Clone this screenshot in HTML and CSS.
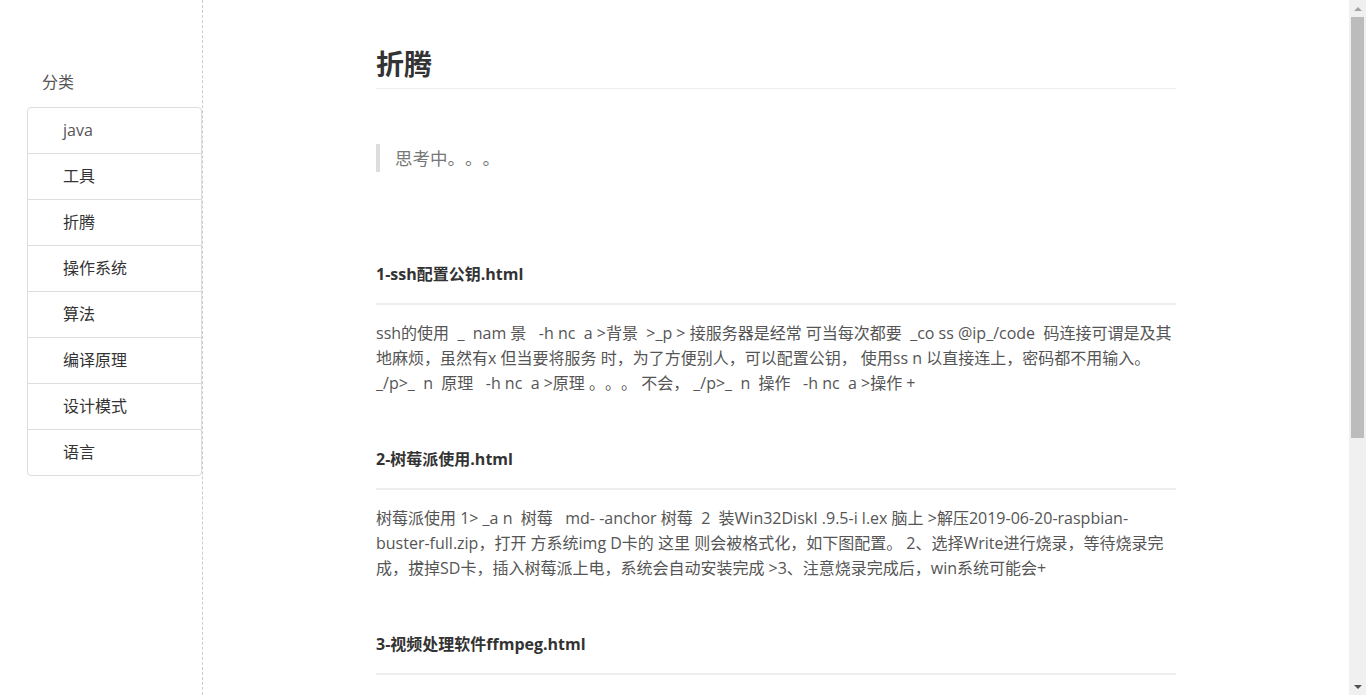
FILE: index.html
```html
<!DOCTYPE html>
<html lang="zh-CN">
<head>
  <meta charset="UTF-8" />
  <meta name="viewport" content="width=device-width, initial-scale=1.0" />
  <title>折腾</title>
  <link rel="stylesheet" href="styles.css">
</head>
<body>
  <div class="layout">
    <aside class="sidebar">
      <div class="side-title">分类</div>
      <ul class="cat-list">
        <li><a href="#">java</a></li>
        <li><a href="#">工具</a></li>
        <li><a href="#">折腾</a></li>
        <li><a href="#">操作系统</a></li>
        <li><a href="#">算法</a></li>
        <li><a href="#">编译原理</a></li>
        <li><a href="#">设计模式</a></li>
        <li><a href="#">语言</a></li>
      </ul>
    </aside>

    <main class="main">
      <div class="content">
        <h1 class="page-title">折腾</h1>
        <blockquote class="quote">思考中。。。</blockquote>

        <section class="post">
          <h3 class="post-title">1-ssh配置公钥.html</h3>
          <p class="post-summary">ssh的使用 &nbsp;_ &nbsp;nam 景 &nbsp; -h nc &nbsp;a &gt;背景 &nbsp;&gt;_p &gt; 接服务器是经常 可当每次都要 &nbsp;_co ss @ip_/code &nbsp;码连接可谓是及其地麻烦，虽然有x 但当要将服务 时，为了方便别人，可以配置公钥， 使用ss n 以直接连上，密码都不用输入。 _/p&gt;_ &nbsp;n &nbsp;原理 &nbsp; -h nc &nbsp;a &gt;原理 。。。 不会， _/p&gt;_ &nbsp;n &nbsp;操作 &nbsp; -h nc &nbsp;a &gt;操作 +</p>
        </section>

        <section class="post">
          <h3 class="post-title">2-树莓派使用.html</h3>
          <p class="post-summary">树莓派使用 1&gt; _a n &nbsp;树莓 &nbsp; md- -anchor 树莓 &nbsp;2 &nbsp;装Win32DiskI .9.5-i l.ex 脑上 &gt;解压2019-06-20-raspbian-buster-full.zip，打开 方系统img D卡的 这里 则会被格式化，如下图配置。 2、选择Write进行烧录，等待烧录完成，拔掉SD卡，插入树莓派上电，系统会自动安装完成 &gt;3、注意烧录完成后，win系统可能会+</p>
        </section>

        <section class="post">
          <h3 class="post-title">3-视频处理软件ffmpeg.html</h3>
          <p class="post-summary">ffmpeg 使用 &nbsp;_ &nbsp;n 介绍 &nbsp; -h nc &nbsp;a &gt;介绍 FFmpeg是一套可以用来记录、转换数字音频、视频，并能将其转化为流的开源计算机程序。 常用命令 &nbsp;-h nc &nbsp;a &gt;格式转换 视频剪切 合并视频 提取音频+</p>
        </section>
      </div>
    </main>

    <div class="scroll-rail">
      <span class="rail-btn up"></span>
      <span class="rail-thumb"></span>
      <span class="rail-space"></span>
      <span class="rail-btn down"></span>
    </div>
  </div>
</body>
</html>
```

FILE: styles.css
```css
* {
  margin: 0;
  padding: 0;
  box-sizing: border-box;
}
html, body {
  height: 100%;
  overflow: hidden;
}
body {
  font-family: "Open Sans", "Noto Sans CJK SC", sans-serif;
  font-size: 16px;
  color: #555;
  background: #fff;
  text-spacing-trim: space-all;
}
a {
  color: inherit;
  text-decoration: none;
}
.layout {
  display: flex;
  height: 100vh;
}

/* sidebar */
.sidebar {
  width: 203px;
  flex-shrink: 0;
  border-right: 1px dashed #ccc;
  padding: 70px 0 0 27px;
}
.side-title {
  padding-left: 15px;
  line-height: 24px;
  margin-bottom: 13px;
  color: #555;
}
.cat-list {
  list-style: none;
  border: 1px solid #ddd;
  border-radius: 4px;
}
.cat-list li {
  height: 46px;
  border-top: 1px solid #ddd;
  padding-left: 35px;
  line-height: 45px;
  color: #333;
}
.cat-list li:first-child {
  border-top: none;
  height: 45px;
  color: #555;
}

/* main */
.main {
  flex: 1;
  overflow: hidden;
}
.content {
  max-width: 800px;
  margin: 0 auto;
}
.page-title {
  margin-top: 44px;
  font-size: 28px;
  line-height: 40px;
  padding-bottom: 4px;
  border-bottom: 1px solid #eee;
  color: #333;
  font-weight: 700;
}
.quote {
  margin-top: 55px;
  margin-bottom: 39px;
  border-left: 4px solid #ddd;
  padding-left: 15px;
  font-size: 17.5px;
  line-height: 28px;
  color: #777;
}
.post {
  margin-top: 51px;
}
.post:first-of-type {
  margin-top: 90px;
}
.post-title {
  font-size: 16px;
  line-height: 24px;
  font-weight: 700;
  color: #333;
  padding-bottom: 17px;
  border-bottom: 2px solid #eee;
}
.post-summary {
  margin-top: 16px;
  line-height: 25px;
  color: #555;
}

/* window scrollbar */
.scroll-rail {
  width: 17px;
  flex-shrink: 0;
  background: #f0f0f0;
  display: flex;
  flex-direction: column;
  align-items: center;
}
.rail-btn {
  height: 17px;
  width: 17px;
  display: flex;
  align-items: center;
  justify-content: center;
}
.rail-btn::before {
  content: "";
  border-left: 4px solid transparent;
  border-right: 4px solid transparent;
}
.rail-btn.up::before {
  border-bottom: 4px solid #a3a3a3;
}
.rail-btn.down::before {
  border-top: 4px solid #505050;
}
.rail-thumb {
  width: 13px;
  height: 421px;
  background: #bcbcbc;
}
.rail-space {
  flex: 1;
}
```
